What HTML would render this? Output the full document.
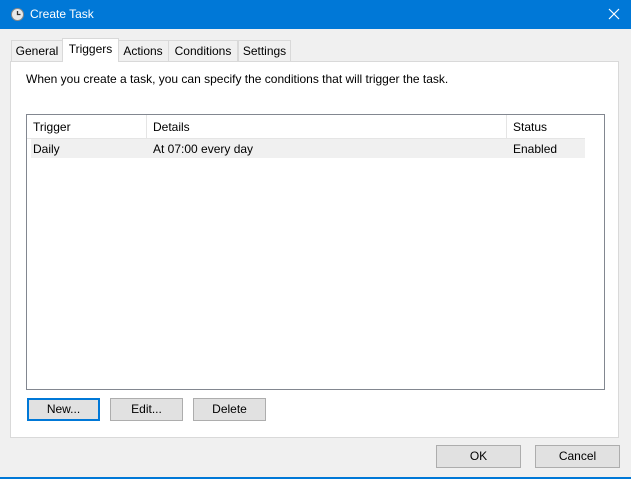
<!DOCTYPE html>
<html><head><style>
body{margin:0;width:631px;height:479px;background:#f0f0f0;font-family:"Liberation Sans",sans-serif;font-size:12px;color:#000;position:relative;overflow:hidden}
.a{position:absolute}
.title{left:0;top:0;width:631px;height:29px;background:#0078d7;color:#fff}
.tab{top:40px;height:20px;border:1px solid #d9d9d9;border-bottom:none;background:#f0f0f0;text-align:center;line-height:20px}
.btn{background:#e1e1e1;border:1px solid #adadad;text-align:center;box-sizing:border-box}
</style></head><body>
<div class="a title">
<svg class="a" style="left:11px;top:8px" width="13" height="13" viewBox="0 0 13 13"><circle cx="6.5" cy="6.5" r="6" fill="#e8e8e8" stroke="#888"/><path d="M6.5 3v3.5h3" stroke="#333" stroke-width="1.3" fill="none"/></svg>
<div class="a" style="left:30px;top:7px;font-size:12px">Create Task</div>
<svg class="a" style="left:608px;top:8px" width="12" height="12"><path d="M1 1L11 11M11 1L1 11" stroke="#fff" stroke-width="1.2"/></svg>
</div>
<div class="a" style="left:10px;top:61px;width:607px;height:375px;background:#fff;border:1px solid #d9d9d9"></div>
<div class="a tab" style="left:11px;width:50px">General</div>
<div class="a tab" style="left:62px;top:38px;height:23px;width:55px;background:#fff;z-index:2;line-height:21px">Triggers</div>
<div class="a tab" style="left:117px;width:50px">Actions</div>
<div class="a tab" style="left:168px;width:68px">Conditions</div>
<div class="a tab" style="left:238px;width:51px">Settings</div>
<div class="a" style="left:26px;top:72px">When you create a task, you can specify the conditions that will trigger the task.</div>
<div class="a" style="left:26px;top:114px;width:577px;height:274px;border:1px solid #828790;background:#fff"></div>
<div class="a" style="left:27px;top:115px;width:558px;height:23px;background:#fff;border-bottom:1px solid #e5e5e5"></div>
<div class="a" style="left:146px;top:115px;width:1px;height:23px;background:#e5e5e5"></div>
<div class="a" style="left:506px;top:115px;width:1px;height:23px;background:#e5e5e5"></div>
<div class="a" style="left:33px;top:120px">Trigger</div>
<div class="a" style="left:153px;top:120px">Details</div>
<div class="a" style="left:513px;top:120px">Status</div>
<div class="a" style="left:31px;top:139px;width:554px;height:19px;background:#f0f0f0"></div>
<div class="a" style="left:33px;top:142px">Daily</div>
<div class="a" style="left:153px;top:142px">At 07:00 every day</div>
<div class="a" style="left:513px;top:142px">Enabled</div>
<div class="a btn" style="left:27px;top:398px;width:73px;height:23px;border:2px solid #0078d7;line-height:19px">New...</div>
<div class="a btn" style="left:110px;top:398px;width:73px;height:23px;line-height:21px">Edit...</div>
<div class="a btn" style="left:193px;top:398px;width:73px;height:23px;line-height:21px">Delete</div>
<div class="a btn" style="left:436px;top:445px;width:85px;height:23px;line-height:21px">OK</div>
<div class="a btn" style="left:535px;top:445px;width:85px;height:23px;line-height:21px">Cancel</div>
<div class="a" style="left:0;top:477px;width:631px;height:2px;background:#0078d7"></div>
</body></html>
